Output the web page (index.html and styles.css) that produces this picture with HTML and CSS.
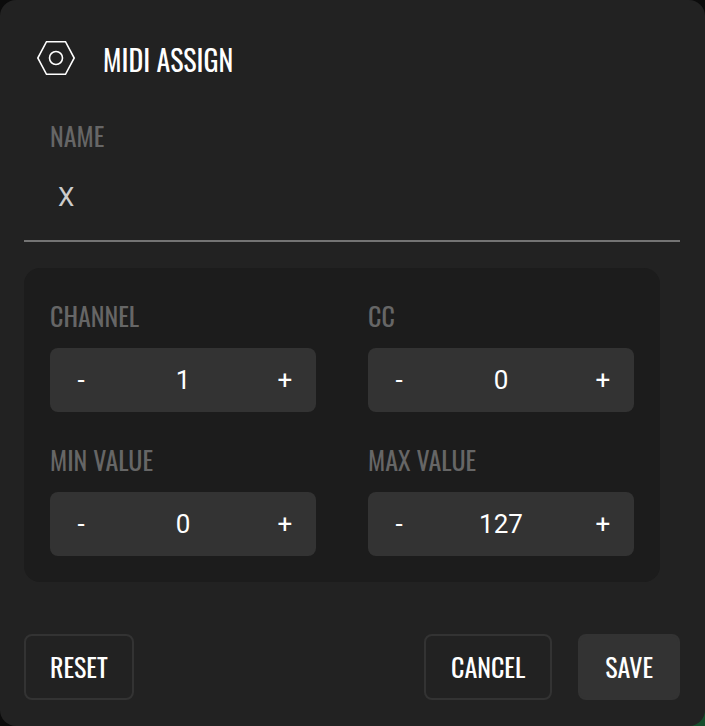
FILE: index.html
```html
<!DOCTYPE html>
<html lang="en">
<head>
<meta charset="utf-8">
<meta name="viewport" content="width=device-width, initial-scale=1">
<title>MIDI Assign</title>
<link rel="stylesheet" href="styles.css">
</head>
<body>
<form class="dialog" role="dialog" aria-labelledby="title">
  <header class="header">
    <svg class="logo" viewBox="0 0 40 36" aria-hidden="true">
      <path d="M10.500 1.700H29.500L38.200 18L29.500 34.300H10.500L1.800 18Z"/>
      <circle cx="20" cy="18" r="6.500"/>
    </svg>
    <h1 class="title" id="title">MIDI ASSIGN</h1>
  </header>

  <div class="field">
    <label class="label" for="name">NAME</label>
    <input class="name" id="name" type="text" value="X" autocomplete="off">
  </div>

  <div class="panel">
    <div class="setting">
      <label class="label" for="channel">CHANNEL</label>
      <div class="stepper">
        <button class="step" type="button" aria-label="Decrease channel">-</button>
        <input class="value" id="channel" type="text" inputmode="numeric" value="1">
        <button class="step" type="button" aria-label="Increase channel">+</button>
      </div>
    </div>
    <div class="setting">
      <label class="label" for="cc">CC</label>
      <div class="stepper">
        <button class="step" type="button" aria-label="Decrease CC">-</button>
        <input class="value" id="cc" type="text" inputmode="numeric" value="0">
        <button class="step" type="button" aria-label="Increase CC">+</button>
      </div>
    </div>
    <div class="setting">
      <label class="label" for="min">MIN VALUE</label>
      <div class="stepper">
        <button class="step" type="button" aria-label="Decrease min value">-</button>
        <input class="value" id="min" type="text" inputmode="numeric" value="0">
        <button class="step" type="button" aria-label="Increase min value">+</button>
      </div>
    </div>
    <div class="setting">
      <label class="label" for="max">MAX VALUE</label>
      <div class="stepper">
        <button class="step" type="button" aria-label="Decrease max value">-</button>
        <input class="value" id="max" type="text" inputmode="numeric" value="127">
        <button class="step" type="button" aria-label="Increase max value">+</button>
      </div>
    </div>
  </div>

  <footer class="actions">
    <button class="button reset" type="reset">RESET</button>
    <button class="button" type="button">CANCEL</button>
    <button class="button primary" type="submit">SAVE</button>
  </footer>
</form>
</body>
</html>
```
FILE: styles.css
```css
* {
  box-sizing: border-box;
}

body {
  margin: 0;
  background: linear-gradient(135deg, #0c0c0c 90%, #164d2c 98%);
  color: #fff;
  font-family: Oswald, "Liberation Sans Narrow", "Liberation Sans", sans-serif;
}

button,
input {
  margin: 0;
  border: 0;
  background: none;
  color: inherit;
  font-family: inherit;
}

.dialog {
  display: flex;
  flex-direction: column;
  min-height: 100vh;
  padding: 26px 25px 26px 24px;
  border-radius: 16px;
  background: #222;
}

.header {
  display: flex;
  align-items: center;
  gap: 27px;
  height: 64px;
  padding-left: 12px;
}

.logo {
  width: 40px;
  height: 36px;
  fill: none;
  stroke: #fff;
  stroke-width: 1.6;
}

.title {
  margin: 0;
  padding-top: 2px;
  font-size: 28px;
  font-weight: 400;
}

.label {
  display: block;
  color: #666;
  font-size: 26px;
  font-weight: 400;
  line-height: 44px;
}

.field {
  margin-top: 24px;
  border-bottom: 2px solid #747474;
}

.field .label {
  padding-left: 26px;
}

.name {
  display: block;
  width: 100%;
  height: 82px;
  padding: 0 34px 4px;
  color: #ccc;
  font-family: Roboto, sans-serif;
  font-size: 26px;
}

.panel {
  display: grid;
  grid-template-columns: repeat(2, minmax(0, 1fr));
  gap: 26px 52px;
  margin: 26px 20px 0 0;
  padding: 26px;
  border-radius: 16px;
  background: #1c1c1c;
}

.stepper {
  display: flex;
  height: 64px;
  margin-top: 10px;
  border-radius: 8px;
  background: #333;
  font-family: Roboto, sans-serif;
}

.step,
.value {
  padding: 0;
  font-size: 26px;
}

.step {
  flex: none;
  width: 62px;
}

.value {
  flex: 1;
  min-width: 0;
  text-align: center;
}

.actions {
  display: flex;
  gap: 26px;
  margin-top: auto;
  padding-top: 26px;
}

.button {
  height: 66px;
  padding: 0 25px 2px;
  border: 2px solid #333;
  border-radius: 8px;
  font-size: 26px;
}

.reset {
  margin-right: auto;
  padding: 0 24px 2px;
}

.primary {
  background: #333;
}
```
